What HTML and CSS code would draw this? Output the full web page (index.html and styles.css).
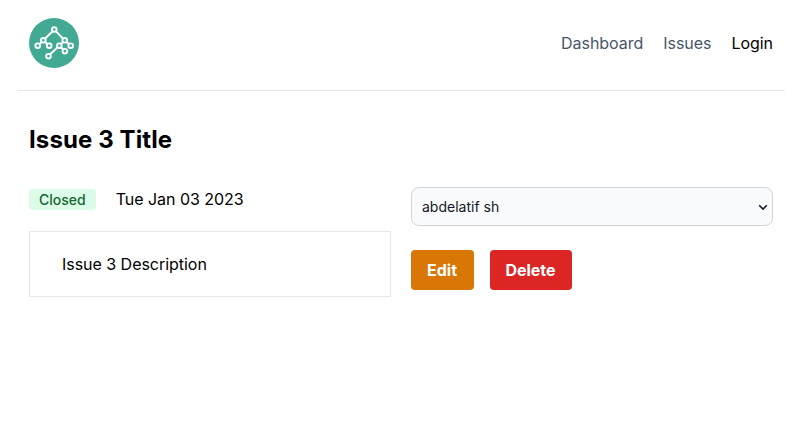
FILE: index.html
```html
<!DOCTYPE html>
<html lang="en">
<head>
<meta charset="utf-8">
<title>Issue 3</title>
<link rel="stylesheet" href="styles.css">
</head>
<body>
<header class="header">
  <svg class="logo" viewBox="0 0 50 50" aria-label="Home">
    <circle cx="25" cy="25" r="25" fill="#42aa93"/>
    <g fill="#42aa93" stroke="#fff" stroke-width="1.900">
      <path fill="none" d="M8.700 27.700 14.300 22.300 25.300 11.700 35.700 22.300 41.700 27.700M14.300 22.300 20 27.700M35.700 22.300 30.300 27.700 19.300 38M30.300 27.700 35.700 33"/>
      <circle cx="25.300" cy="11.500" r="2.300"/>
      <circle cx="14.300" cy="22.300" r="2.300"/>
      <circle cx="8.700" cy="27.700" r="2.300"/>
      <circle cx="20.200" cy="27.700" r="2.300"/>
      <circle cx="35.700" cy="22.300" r="2.300"/>
      <circle cx="30.300" cy="27.700" r="2.300"/>
      <circle cx="41.700" cy="27.700" r="2.300"/>
      <circle cx="35.900" cy="33.200" r="2.300"/>
      <circle cx="19.500" cy="38.200" r="2.300"/>
    </g>
  </svg>
  <nav class="nav"><a>Dashboard</a><a>Issues</a><a class="login">Login</a></nav>
</header>
<main class="main">
  <h1>Issue 3 Title</h1>
  <div class="grid">
    <section>
      <div class="meta"><span class="badge">Closed</span><span class="date">Tue Jan 03 2023</span></div>
      <div class="card">Issue 3 Description</div>
    </section>
    <section>
      <div class="field">
        <select class="select"><option>abdelatif sh</option></select>
        <svg class="chevron" viewBox="0 0 10 7"><path d="M1.200 1.200 5 5l3.800-3.800"/></svg>
      </div>
      <div class="actions"><button class="btn edit">Edit</button><button class="btn delete">Delete</button></div>
    </section>
  </div>
</main>
</body>
</html>
```
FILE: styles.css
```css
* { box-sizing: border-box; }
body { margin: 0; font: 16px/24px Inter, sans-serif; color: #000; background: #fff; }
.header { display: flex; align-items: center; justify-content: space-between; height: 91px; margin: 0 15px 0 17px; padding: 0 12px 5px; border-bottom: 1px solid #e5e7eb; }
.logo { width: 50px; height: 50px; }
.nav { display: flex; gap: 20px; color: #475569; letter-spacing: -0.04px; }
.login { color: #000; }
.main { padding: 33px 27px 0 29px; }
h1 { margin: 0; font-size: 24px; line-height: 32px; font-weight: 700; letter-spacing: 0.1px; }
.grid { display: grid; grid-template-columns: 1fr 1fr; gap: 20px; margin-top: 31px; }
.meta { display: flex; align-items: center; gap: 20px; height: 24px; }
.date { letter-spacing: -0.03px; }
.badge { height: 21px; margin-top: 1px; padding: 0 10px; font-size: 14px; line-height: 22px; font-weight: 500; color: #166534; background: #dcfce7; border-radius: 4px; }
.card { height: 66px; margin-top: 20px; padding: 20px 32px; border: 1px solid #e5e7eb; letter-spacing: -0.03px; }
.field { position: relative; }
.select { display: block; width: 100%; height: 39px; padding: 1px 10px 0; font: 14px/20px Inter, sans-serif; color: #111827; background: #f9fafb; border: 1px solid #d1d5db; border-radius: 8px; appearance: none; }
.chevron { position: absolute; right: 5px; top: 17px; width: 10px; height: 7px; fill: none; stroke: #111827; stroke-width: 1.6; pointer-events: none; }
.actions { display: flex; gap: 16px; margin-top: 24px; }
.btn { height: 40px; padding: 0 1px 0 0; border: 0; border-radius: 4px; font: 700 16px/24px Inter, sans-serif; color: #fff; }
.edit { width: 63px; background: #d97706; }
.delete { width: 82px; background: #dc2626; }
```
